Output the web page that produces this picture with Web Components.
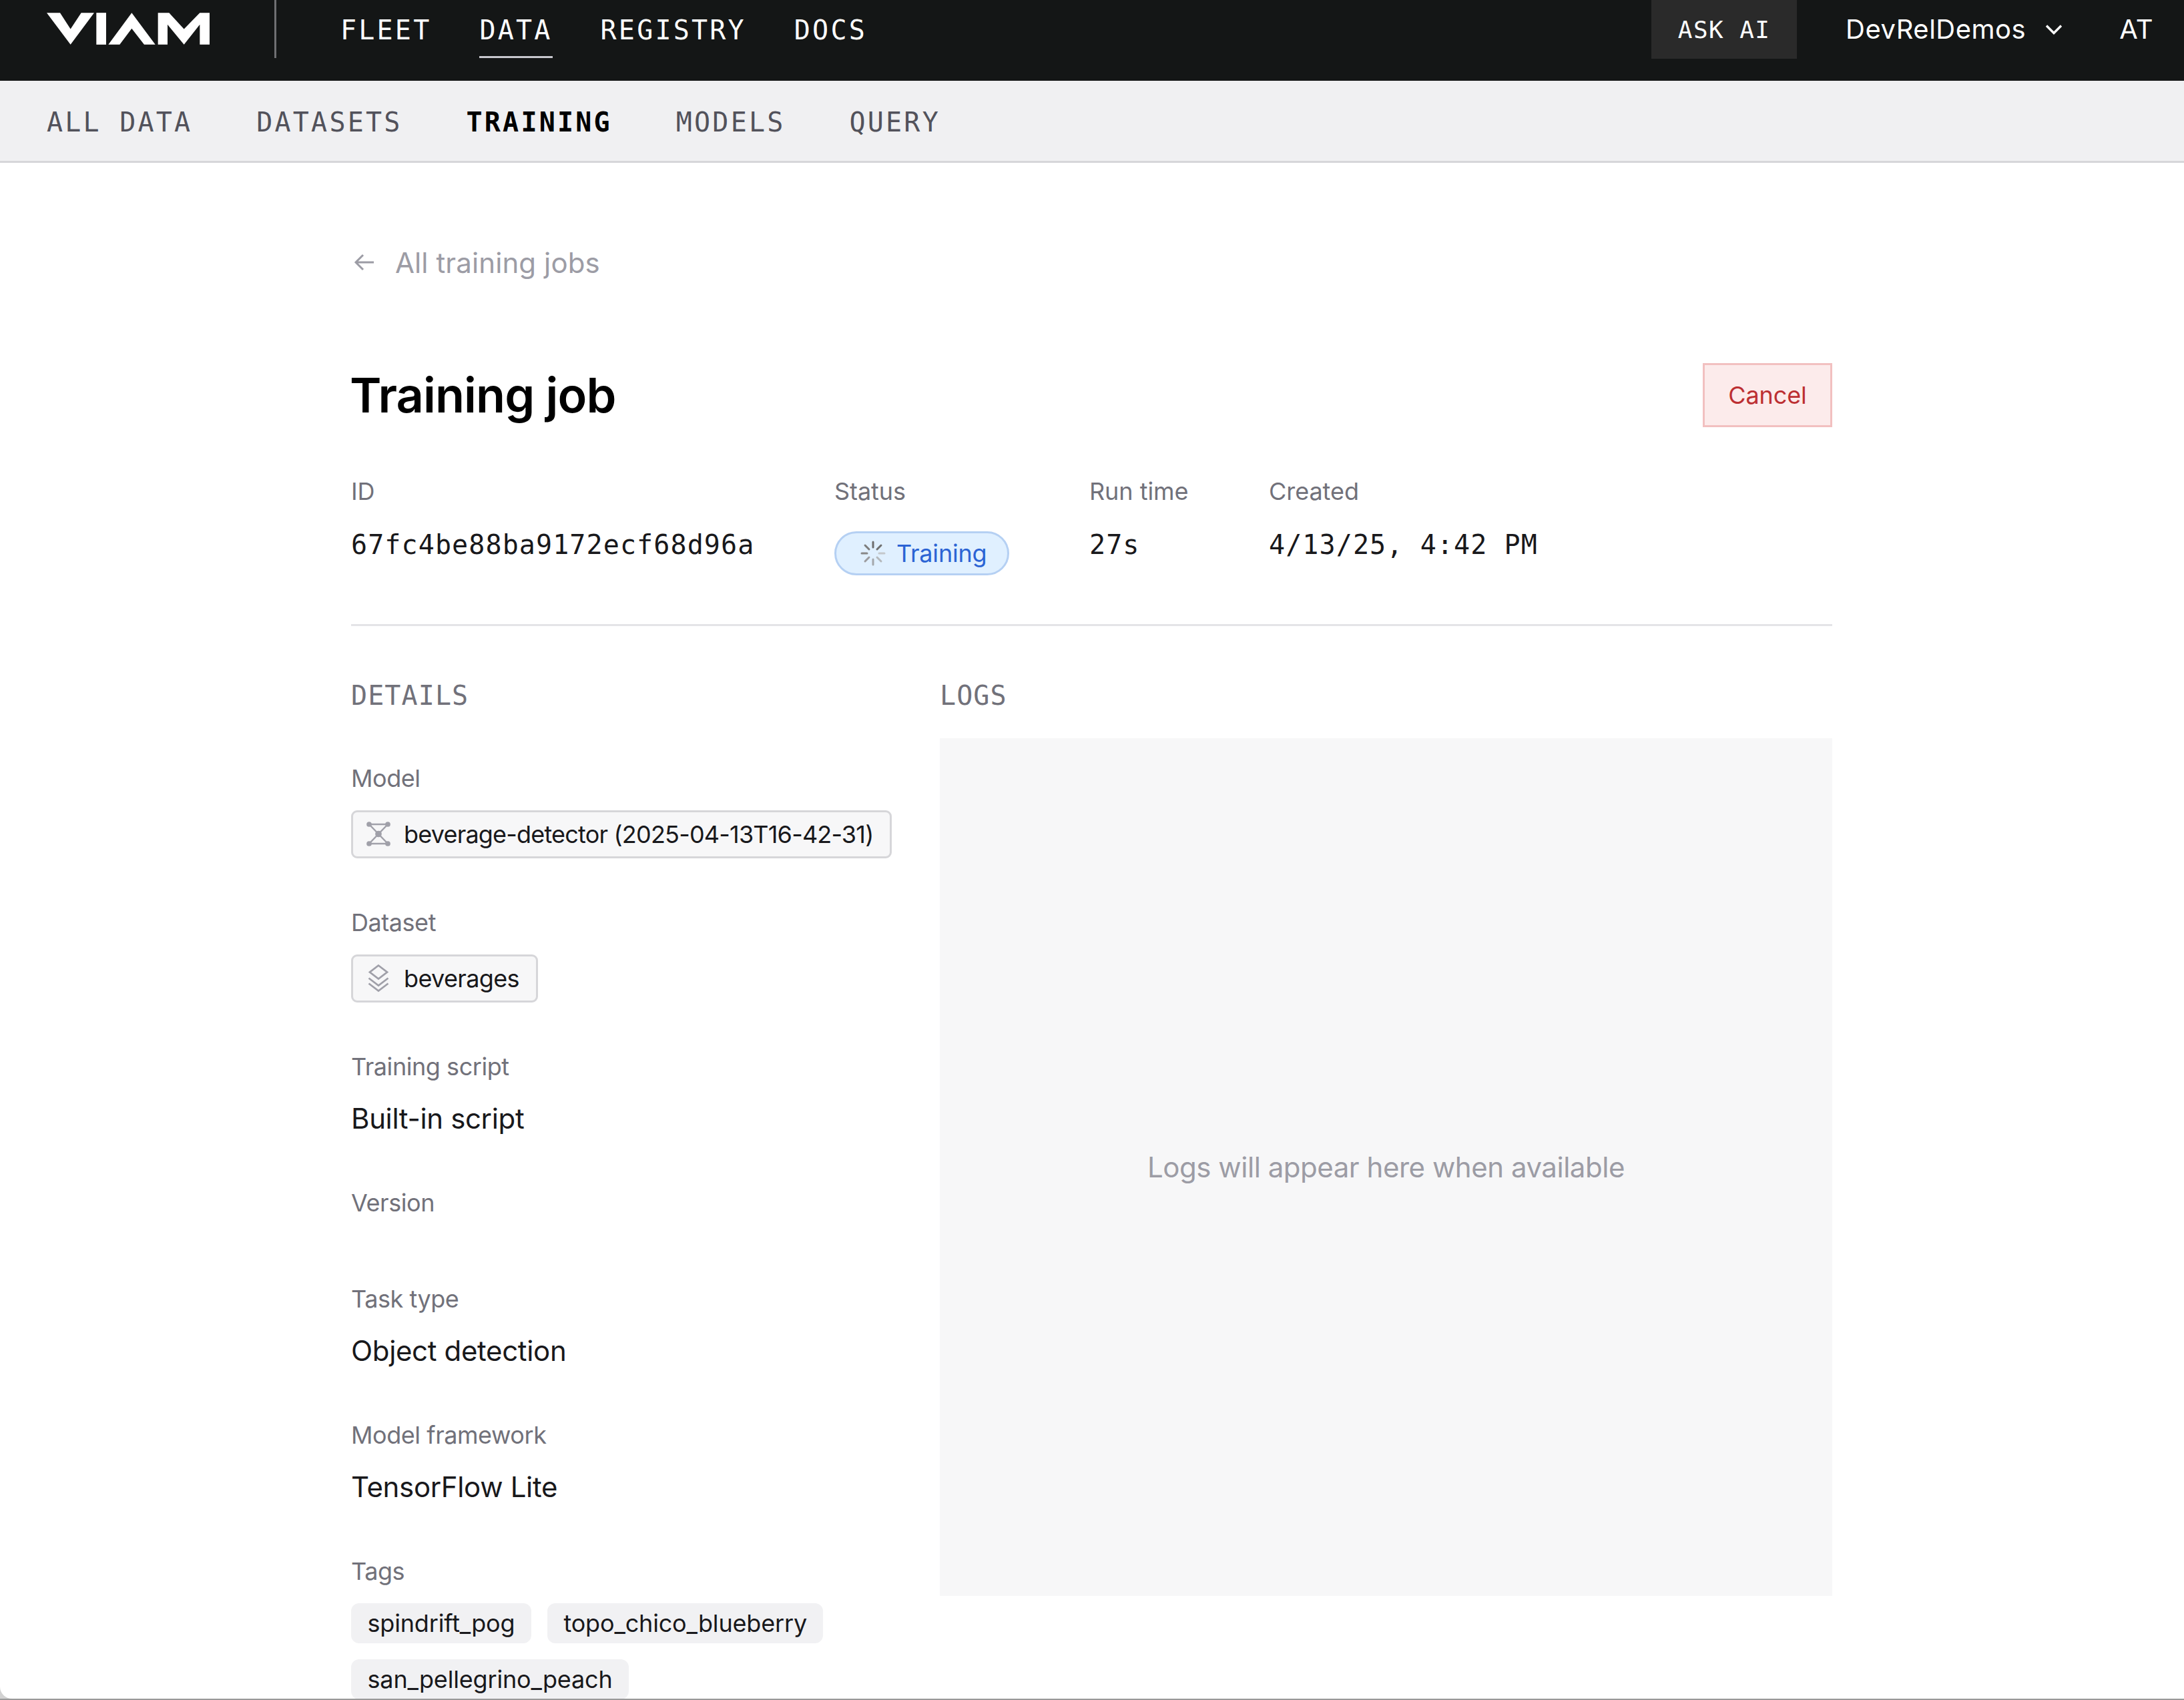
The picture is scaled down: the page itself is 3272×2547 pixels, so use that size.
<!DOCTYPE html>
<html lang="en">
<head>
<meta charset="utf-8">
<title>Training job</title>
<style>
html, body { margin: 0; height: 2547px; overflow: hidden; }
body {
    background: linear-gradient(to bottom, #d2d2d2 2545px, #999 2545px);
    font-family: Inter, "Noto Sans", sans-serif;
    color: #18181b;
}
.frame {
    height: 2545px;
    overflow: hidden;
    background: #fff;
    border-bottom-left-radius: 18px;
}
</style>
</head>
<body>
<div class="frame">
    <top-nav></top-nav>
    <sub-nav></sub-nav>
    <job-page>
        <field-item label="Model"><resource-chip icon="model" style="letter-spacing: -.8px">beverage-detector (2025-04-13T16-42-31)</resource-chip></field-item>
        <field-item label="Dataset"><resource-chip icon="dataset" style="letter-spacing: -.65px">beverages</resource-chip></field-item>
        <field-item label="Training script">Built-in script</field-item>
        <field-item label="Version"></field-item>
        <field-item label="Task type">Object detection</field-item>
        <field-item label="Model framework">TensorFlow Lite</field-item>
        <field-item label="Tags">
            <tag-list>
                <tag-chip>spindrift_pog</tag-chip>
                <tag-chip>topo_chico_blueberry</tag-chip>
                <tag-chip>san_pellegrino_peach</tag-chip>
            </tag-list>
        </field-item>
    </job-page>
</div>

<script>
const MONO = `"DejaVu Sans Mono", "Liberation Mono", monospace`;
const SANS = `Inter, "Noto Sans", sans-serif`;

class TopNav extends HTMLElement {
    constructor() {
        super();
        this.attachShadow({ mode: 'open' });
        this.shadowRoot.innerHTML = `
<style>
:host { display: flex; align-items: flex-start; height: 121px; background: #141616; color: #fff; }
.logo { display: block; width: 244px; height: 48px; margin: 19px 0 0 70px; }
.rule { width: 3px; height: 87px; margin-left: 97px; background: #6f6f72; }
nav { display: flex; gap: 72px; margin-left: 96px; font: 40px/90px ${MONO}; letter-spacing: 3.2px; }
nav a { display: block; height: 84px; }
nav a.on { height: 84px; border-bottom: 3px solid #c8c8ce; }
.right { display: flex; align-items: flex-start; margin-left: auto; }
.ask { width: 218px; height: 88px; box-sizing: border-box; background: #2a2a2a; text-align: center; font: 36px/90px ${MONO}; letter-spacing: 1.4px; }
.org { display: flex; align-items: center; gap: 28px; height: 87px; margin-left: 73px; font: 40px/87px ${SANS}; letter-spacing: .5px; }
.org svg { width: 28px; height: 16px; }
.me { margin: 0 46px 0 84px; font: 40px/87px ${SANS}; letter-spacing: .4px; }
</style>
<svg class="logo" viewBox="90 57 732 143" fill="#fff" aria-hidden="true">
    <polygon points="90,57 150,57 197,130 245,57 303,57 197,200"/>
    <rect x="313" y="57" width="44" height="143"/>
    <polygon points="367,200 472,57 578,200 528,200 472,128 418,200"/>
    <polygon points="590,57 640,57 707,130 778,57 822,57 822,200 778,200 778,110 707,200 633,110 633,200 590,200"/>
</svg>
<div class="rule"></div>
<nav><a>FLEET</a><a class="on">DATA</a><a>REGISTRY</a><a>DOCS</a></nav>
<div class="right">
    <div class="ask">ASK AI</div>
    <div class="org">DevRelDemos
        <svg viewBox="0 0 28 16" fill="none" stroke="#fff" stroke-width="3.4"><path d="M3 2.5 14 13.5 25 2.5"/></svg>
    </div>
    <div class="me">AT</div>
</div>`;
    }
}

class SubNav extends HTMLElement {
    constructor() {
        super();
        this.attachShadow({ mode: 'open' });
        this.shadowRoot.innerHTML = `
<style>
:host { display: flex; gap: 96px; box-sizing: border-box; height: 123px; padding-left: 70px; background: #f0f0f2; border-bottom: 3px solid #d6d6d9; color: #52525b; font: 40px/124px ${MONO}; letter-spacing: 3.2px; }
.on { color: #000; font-weight: 700; }
</style>
<a>ALL DATA</a><a>DATASETS</a><a class="on">TRAINING</a><a>MODELS</a><a>QUERY</a>`;
    }
}

class JobPage extends HTMLElement {
    constructor() {
        super();
        this.attachShadow({ mode: 'open' });
        this.shadowRoot.innerHTML = `
<style>
:host { display: block; padding: 119px 527px 0 526px; font-family: ${SANS}; }
.back { display: flex; align-items: center; gap: 30px; height: 60px; color: #9c9ca5; font-size: 42px; letter-spacing: .1px; }
.back svg { width: 32px; height: 28px; margin-left: 4px; }
.title { display: flex; justify-content: space-between; align-items: center; margin-top: 121px; }
h1 { margin: 0 0 0 -2px; font-size: 72px; line-height: 96px; font-weight: 600; letter-spacing: -.9px; color: #000; }
button { box-sizing: border-box; width: 194px; height: 96px; padding: 0; background: #fcebeb; border: 3px solid #f2c0c0; color: #bc2f32; font: 36px ${SANS}; letter-spacing: -.1px; }
.meta { display: grid; grid-template-columns: 724px 382px 269px 1fr; height: 150px; margin-top: 72px; padding-bottom: 73px; border-bottom: 3px solid #e4e4e7; }
.label { color: #71717a; font-size: 36px; line-height: 48px; letter-spacing: -.05px; }
.val { margin-top: 26px; font: 40px/60px ${MONO}; letter-spacing: 1.1px; color: #18181b; white-space: pre; }
.badge { display: inline-flex; align-items: center; gap: 15px; box-sizing: border-box; height: 66px; margin-top: 36px; padding: 0 31px 0 35px; background: #e0f0ff; border: 3px solid #b5d0f3; border-radius: 33px; color: #2b63d4; font-size: 36px; letter-spacing: -.2px; }
.badge svg { width: 40px; height: 40px; }
.cols { display: grid; grid-template-columns: 882px 1fr; margin-top: 79px; }
h2 { margin: 0; color: #71717a; font: 400 40px/50px ${MONO}; height: 48px; letter-spacing: 1.1px; }
.fields { margin-top: 77px; }
.logs { display: flex; align-items: center; justify-content: center; height: 1285px; margin-top: 41px; background: #f7f7f8; color: #9c9ca5; font-size: 42px; letter-spacing: -.47px; }
</style>
<a class="back">
    <svg viewBox="0 0 32 28" fill="none" stroke="#9c9ca5" stroke-width="3"><path d="M30 14H3M14 3 3 14l11 11"/></svg>
    All training jobs
</a>
<div class="title"><h1>Training job</h1><button>Cancel</button></div>
<div class="meta">
    <div><div class="label">ID</div><div class="val">67fc4be88ba9172ecf68d96a</div></div>
    <div><div class="label">Status</div>
        <div class="badge">
            <svg viewBox="0 0 40 40" fill="none" stroke-width="3" stroke-linecap="round">
                <path stroke="#6d6d6d" d="M20 3v8"/>
                <path stroke="#707070" d="M32 8l-6 6"/>
                <path stroke="#c4c8cc" d="M37 20h-8"/>
                <path stroke="#b4b8bc" d="M32 32l-6-6"/>
                <path stroke="#a4a8ac" d="M20 37v-8"/>
                <path stroke="#9c9ca0" d="M8 32l6-6"/>
                <path stroke="#888" d="M3 20h8"/>
                <path stroke="#7c7c7c" d="M8 8l6 6"/>
            </svg>
            Training
        </div>
    </div>
    <div><div class="label">Run time</div><div class="val">27s</div></div>
    <div><div class="label">Created</div><div class="val">4/13/25, 4:42 PM</div></div>
</div>
<div class="cols">
    <div>
        <h2>DETAILS</h2>
        <div class="fields"><slot></slot></div>
    </div>
    <div>
        <h2>LOGS</h2>
        <div class="logs">Logs will appear here when available</div>
    </div>
</div>`;
    }
}

class FieldItem extends HTMLElement {
    constructor() {
        super();
        this.attachShadow({ mode: 'open' });
        this.shadowRoot.innerHTML = `
<style>
:host { display: block; padding-bottom: 72px; }
.label { margin-bottom: 24px; color: #71717a; font: 36px/48px ${SANS}; letter-spacing: -.45px; }
.value { color: #18181b; font: 42px/60px ${SANS}; letter-spacing: -.35px; }
</style>
<div class="label"></div>
<div class="value"><slot></slot></div>`;
    }

    connectedCallback() {
        this.shadowRoot.querySelector('.label').textContent = this.getAttribute('label');
    }
}

const CHIP_ICONS = {
    model: `<g fill="#a0a0a9" stroke="#a0a0a9" stroke-width="2.5"><path fill="none" d="M4 6h28M4 35h28M4 6l28 29M32 6 4 35"/><circle cx="4" cy="6" r="2.6"/><circle cx="32" cy="6" r="2.6"/><circle cx="4" cy="35" r="2.6"/><circle cx="32" cy="35" r="2.6"/><circle cx="18" cy="20.5" r="3.6"/></g>`,
    dataset: `<g fill="none" stroke="#a0a0a9" stroke-width="2.8"><path d="M18 1.5 31 11.5 18 21.5 5 11.5Z"/><path d="M3.5 20.5 18 31.5 32.5 20.5M3.5 28.5 18 39.5 32.5 28.5"/></g>`,
};

class ResourceChip extends HTMLElement {
    constructor() {
        super();
        this.attachShadow({ mode: 'open' });
    }

    connectedCallback() {
        const icon = CHIP_ICONS[this.getAttribute('icon')] || '';
        this.shadowRoot.innerHTML = `
<style>
:host { display: inline-flex; align-items: center; box-sizing: border-box; height: 72px; padding: 0 25px 0 20px; gap: 20px; background: #f7f7f8; border: 3px solid #d6d6d9; border-radius: 9px; color: #18181b; font: 36px/60px ${SANS}; vertical-align: top; white-space: nowrap; }
svg { width: 36px; height: 42px; }
</style>
<svg viewBox="0 0 36 42">${icon}</svg><slot></slot>`;
    }
}

class TagList extends HTMLElement {
    constructor() {
        super();
        this.attachShadow({ mode: 'open' });
        this.shadowRoot.innerHTML = `
<style>
:host { display: flex; flex-wrap: wrap; gap: 24px; width: 800px; }
</style>
<slot></slot>`;
    }
}

class TagChip extends HTMLElement {
    constructor() {
        super();
        this.attachShadow({ mode: 'open' });
        this.shadowRoot.innerHTML = `
<style>
:host { display: block; box-sizing: border-box; height: 60px; padding: 0 24.5px; background: #f1f1f3; border-radius: 12px; color: #18181b; font: 36px/60px ${SANS}; letter-spacing: -.17px; }
</style>
<slot></slot>`;
    }
}

customElements.define('top-nav', TopNav);
customElements.define('sub-nav', SubNav);
customElements.define('job-page', JobPage);
customElements.define('field-item', FieldItem);
customElements.define('resource-chip', ResourceChip);
customElements.define('tag-list', TagList);
customElements.define('tag-chip', TagChip);
</script>
</body>
</html>
